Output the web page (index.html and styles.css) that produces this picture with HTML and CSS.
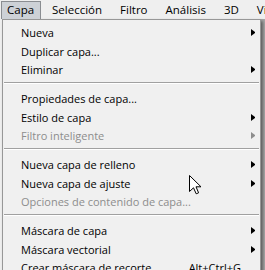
FILE: index.html
```html
<!DOCTYPE html>
<html lang="es">
<head>
<meta charset="utf-8">
<title>Capa</title>
<link rel="stylesheet" href="styles.css">
</head>
<body>
<div class="app">
  <nav class="menubar">
    <span class="mb-item active">Capa</span>
    <span class="mb-item">Selección</span>
    <span class="mb-item">Filtro</span>
    <span class="mb-item">Análisis</span>
    <span class="mb-item">3D</span>
    <span class="mb-item">Vista</span>
  </nav>
  <div class="menu">
    <div class="row"><span class="label">Nueva</span><span class="arrow"></span></div>
    <div class="row"><span class="label">Duplicar capa...</span><span class="noarrow"></span></div>
    <div class="row"><span class="label">Eliminar</span><span class="arrow"></span></div>
    <div class="sep"></div>
    <div class="row"><span class="label">Propiedades de capa...</span><span class="noarrow"></span></div>
    <div class="row"><span class="label">Estilo de capa</span><span class="arrow"></span></div>
    <div class="row disabled"><span class="label">Filtro inteligente</span><span class="arrow"></span></div>
    <div class="sep"></div>
    <div class="row"><span class="label">Nueva capa de relleno</span><span class="arrow"></span></div>
    <div class="row"><span class="label">Nueva capa de ajuste</span><span class="arrow"></span></div>
    <div class="row disabled"><span class="label">Opciones de contenido de capa...</span><span class="noarrow"></span></div>
    <div class="sep"></div>
    <div class="row"><span class="label">Máscara de capa</span><span class="arrow"></span></div>
    <div class="row"><span class="label">Máscara vectorial</span><span class="arrow"></span></div>
    <div class="row"><span class="label">Crear máscara de recorte</span><span class="shortcut">Alt+Ctrl+G</span><span class="noarrow"></span></div>
  </div>
  <svg class="cursor" width="14" height="20" viewBox="0 0 14 20" aria-hidden="true">
    <path d="M0.5 0.5 L0.5 16.5 L4.5 12.8 L7.2 18.8 L9.6 17.8 L7 11.8 L12 11.8 Z" fill="#ffffff" stroke="#000000" stroke-width="1" stroke-linejoin="miter"/>
  </svg>
</div>
</body>
</html>
```

FILE: styles.css
```css
html, body {
  margin: 0;
  padding: 0;
}
body {
  width: 265px;
  height: 270px;
  overflow: hidden;
  background: #a9a9a9;
  font-family: "Open Sans", "Noto Sans", sans-serif;
  font-size: 11px;
  color: #000;
}
.app {
  position: relative;
  width: 265px;
  height: 270px;
  overflow: hidden;
  background: linear-gradient(to right, #efefef 2px, #a9a9a9 2px);
}
.menubar {
  display: flex;
  gap: 4px;
  height: 19px;
  padding-left: 1px;
  background: #efefef;
  white-space: nowrap;
}
.mb-item {
  box-sizing: border-box;
  height: 18px;
  margin-top: 1px;
  padding: 0 6px;
  line-height: 16px;
  border: 1px solid transparent;
  font-size: 11.5px;
}
.mb-item.active {
  background: #cdd1d6;
  border-color: #8a8d91;
  border-bottom: none;
  padding: 0 6px 0 5px;
}
.menu {
  box-sizing: border-box;
  width: 259px;
  margin-left: 2px;
  padding-top: 4px;
  background: #f0f0f0;
  border: 1px solid #979797;
  box-shadow: 2px 2px 3px rgba(0, 0, 0, 0.45);
  height: 260px;
}
.row {
  display: flex;
  height: 18.67px;
  line-height: 18.67px;
  padding-left: 18px;
  padding-right: 5px;
  white-space: nowrap;
}
.label {
  flex: 1;
}
.shortcut {
  margin-right: 5px;
}
.arrow, .noarrow {
  width: 4px;
  margin-left: 5px;
}
.arrow {
  box-sizing: border-box;
  height: 7px;
  margin-top: 5px;
  border-left: 4px solid #000;
  border-top: 3.5px solid transparent;
  border-bottom: 3.5px solid transparent;
}
.disabled {
  color: #8d8d8d;
}
.disabled .arrow {
  border-left-color: #8d8d8d;
}
.sep {
  height: 0;
  margin: 2px 1px 6px 1px;
  border-top: 1px solid #a0a0a0;
  border-bottom: 1px solid #ffffff;
}
.cursor {
  position: absolute;
  left: 189px;
  top: 175px;
}
```
